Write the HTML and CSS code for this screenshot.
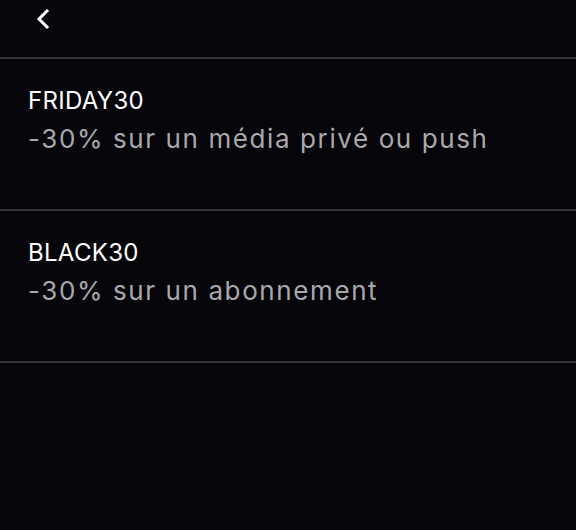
FILE: index.html
```html
<!DOCTYPE html>
<html lang="fr">
<head>
<meta charset="utf-8">
<link rel="stylesheet" href="styles.css">
</head>
<body>
<div class="page">
  <header class="header">
    <button class="back" aria-label="Retour">
      <svg width="14" height="20" viewBox="0 0 14 20"><path d="M11 2 L3 10 L11 18" fill="none" stroke="#fff" stroke-width="3" stroke-linecap="square"/></svg>
    </button>
  </header>
  <div class="row">
    <div class="code">FRIDAY30</div>
    <div class="desc">-30% sur un média privé ou push</div>
  </div>
  <div class="row">
    <div class="code">BLACK30</div>
    <div class="desc">-30% sur un abonnement</div>
  </div>
</div>
</body>
</html>
```
FILE: styles.css
```css
html, body {
  margin: 0;
  padding: 0;
  background: #05050a;
}
.page {
  width: 576px;
  height: 530px;
  background: #05050a;
  font-family: "Inter", "Open Sans", sans-serif;
}
.header {
  height: 57px;
  border-bottom: 2px solid #303035;
  display: flex;
  align-items: flex-start;
}
.back {
  background: none;
  border: 0;
  padding: 0;
  margin: 8px 0 0 34px;
  width: 18px;
  height: 22px;
  display: flex;
  align-items: center;
  justify-content: center;
}
.row {
  border-bottom: 2px solid #303035;
  padding: 24px 28px 0;
  box-sizing: border-box;
  height: 152px;
}
.code {
  color: #ffffff;
  font-size: 24px;
  line-height: 36px;
  letter-spacing: 0.3px;
}
.desc {
  color: #a9a9ad;
  font-size: 26px;
  line-height: 40px;
  letter-spacing: 1.6px;
}
```
